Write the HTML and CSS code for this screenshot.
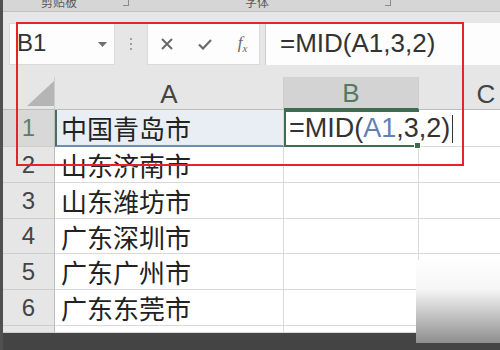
FILE: index.html
```html
<!DOCTYPE html>
<html lang="zh-CN">
<head>
    <meta charset="UTF-8">
    <title>MID 函数</title>
    <link rel="stylesheet" href="styles.css">
</head>
<body>
    <div class="window">
        <div class="ribbon-tail">
            <span class="group-label label-clip">剪贴板</span>
            <span class="launcher launcher-clip"></span>
            <span class="group-label label-font">字体</span>
            <span class="launcher launcher-font"></span>
        </div>

        <div class="formula-bar">
            <div class="name-box">
                <span>B1</span>
                <svg class="name-arrow" width="9" height="5" viewBox="0 0 9 5"><path d="M0 0 L9 0 L4.5 5 Z" fill="#707070"/></svg>
            </div>
            <div class="bar-grip">
                <span></span><span></span><span></span>
            </div>
            <div class="fx-buttons">
                <svg width="12" height="12" viewBox="0 0 12 12"><path d="M1 1 L11 11 M11 1 L1 11" stroke="#6a6a6a" stroke-width="2" fill="none"/></svg>
                <svg width="14" height="11" viewBox="0 0 14 11"><path d="M1 5.5 L5 9.5 L13 1" stroke="#6a6a6a" stroke-width="2.2" fill="none"/></svg>
                <span class="fx">f<sub>x</sub></span>
            </div>
            <div class="formula-input">=MID(A1,3,2)</div>
        </div>

        <div class="sheet">
            <div class="corner">
                <svg width="27" height="25" viewBox="0 0 27 25"><path d="M27 0 L27 25 L0 25 Z" fill="#b5b5b5"/></svg>
            </div>
            <div class="col-head">A</div>
            <div class="col-head is-active">B</div>
            <div class="col-head">C</div>

            <div class="row-head is-active">1</div>
            <div class="cell is-ref">中国青岛市</div>
            <div class="cell is-editing"><span>=MID(<span class="ref-text">A1</span>,3,2)</span><span class="caret"></span></div>
            <div class="cell is-covered"></div>

            <div class="row-head">2</div>
            <div class="cell">山东济南市</div>
            <div class="cell"></div>
            <div class="cell"></div>

            <div class="row-head">3</div>
            <div class="cell">山东潍坊市</div>
            <div class="cell"></div>
            <div class="cell"></div>

            <div class="row-head">4</div>
            <div class="cell">广东深圳市</div>
            <div class="cell"></div>
            <div class="cell"></div>

            <div class="row-head">5</div>
            <div class="cell">广东广州市</div>
            <div class="cell"></div>
            <div class="cell"></div>

            <div class="row-head">6</div>
            <div class="cell">广东东莞市</div>
            <div class="cell"></div>
            <div class="cell"></div>

            <div class="row-head"></div>
            <div class="cell"></div>
            <div class="cell"></div>
            <div class="cell"></div>
        </div>

        <div class="status-strip"></div>

        <div class="highlight-box"></div>
        <div class="corner-fade"></div>
    </div>
</body>
</html>
```

FILE: styles.css
```css
* {
    margin: 0;
    padding: 0;
    box-sizing: border-box;
}

body {
    width: 500px;
    height: 350px;
    overflow: hidden;
    background: #444;
    font-family: 'Liberation Sans', 'Noto Sans CJK SC', sans-serif;
    color: #333;
}

.window {
    position: relative;
    width: 500px;
    height: 350px;
    overflow: hidden;
    border-left: 3px solid #505050;
    background: #e6e6e6;
    display: flex;
    flex-direction: column;
}

/* bottom of the ribbon, labels cut off */
.ribbon-tail {
    height: 12px;
    flex-shrink: 0;
    background: #d6d6d6;
    border-bottom: 1px solid #c2c2c2;
    display: flex;
    align-items: flex-start;
    overflow: hidden;
}

.group-label {
    font-size: 12px;
    line-height: 12px;
    margin-top: -3px;
    color: #5a5a5a;
}

.label-clip {
    margin-left: 38px;
}

.launcher {
    width: 6px;
    height: 6px;
    border-right: 1px solid #8a8a8a;
    border-bottom: 1px solid #8a8a8a;
}

.launcher-clip {
    margin-left: 46px;
}

.label-font {
    margin-left: 116px;
}

.launcher-font {
    margin-left: 116px;
}

/* formula bar */
.formula-bar {
    height: 65px;
    flex-shrink: 0;
    display: flex;
    align-items: stretch;
    padding: 11px 0 12px 6px;
}

.name-box {
    width: 106px;
    background: #fdfdfd;
    border: 1px solid #dadada;
    display: flex;
    align-items: center;
    justify-content: space-between;
    padding: 0 7px 2px 7px;
    font-size: 24px;
    color: #333;
}

.name-arrow {
    margin-top: 2px;
}

.bar-grip {
    width: 32px;
    display: flex;
    flex-direction: column;
    align-items: center;
    justify-content: center;
    gap: 3px;
}

.bar-grip span {
    width: 2px;
    height: 2px;
    background: #a0a0a0;
}

.fx-buttons {
    width: 113px;
    background: #fdfdfd;
    border: 1px solid #dadada;
    display: grid;
    grid-template-columns: 38px 38px 37px;
    align-items: center;
    justify-items: center;
}

.fx {
    font-family: 'Liberation Serif', serif;
    font-style: italic;
    font-size: 17px;
    color: #6a6a6a;
}

.fx sub {
    font-size: 11px;
}

.formula-input {
    flex: 1;
    margin-left: 5px;
    background: #fdfdfd;
    border-left: 1px solid #cfcfcf;
    display: flex;
    align-items: center;
    padding: 0 0 2px 14px;
    font-size: 26px;
    color: #333;
}

/* sheet grid */
.sheet {
    height: 256px;
    flex-shrink: 0;
    display: grid;
    grid-template-columns: 52px 229px 135px 135px;
    grid-template-rows: 33px 37px 36px 36px 35px 36px 36px 7px;
    background: #fff;
}

.corner {
    background: #e6e6e6;
    border-right: 1px solid #cdcdcd;
    border-bottom: 1px solid #bdbdbd;
    display: flex;
    align-items: flex-end;
    justify-content: flex-end;
    padding: 0 0 3px 0;
}

.col-head {
    background: #e6e6e6;
    border-right: 1px solid #cdcdcd;
    border-bottom: 1px solid #bdbdbd;
    display: flex;
    align-items: center;
    justify-content: center;
    font-size: 26px;
    color: #444;
    padding-top: 2px;
}

.col-head.is-active {
    background: #d3d3d3;
    color: #557a64;
    border-bottom: 2px solid #3f6c50;
}

.row-head {
    background: #e6e6e6;
    border-right: 1px solid #bdbdbd;
    border-bottom: 1px solid #cdcdcd;
    display: flex;
    align-items: center;
    justify-content: center;
    font-size: 24px;
    color: #444;
}

.row-head.is-active {
    background: #d8d8d8;
    color: #5b8068;
}

.cell {
    background: #fff;
    border-right: 1px solid #dadada;
    border-bottom: 1px solid #dadada;
    display: flex;
    align-items: center;
    padding-left: 6px;
    font-size: 26px;
    color: #222;
    white-space: nowrap;
}

.cell.is-ref {
    background: #e9eef5;
    border-left: 2px solid #4c6d62;
    border-bottom: 2px solid #6f8db4;
    padding-left: 4px;
}

.cell.is-editing {
    position: relative;
    z-index: 2;
    border: 2px solid #3f6c50;
    border-right: none;
    padding-left: 3px;
    font-size: 27px;
    color: #333;
    overflow: visible;
}

.cell.is-editing > span {
    flex-shrink: 0;
}

.cell.is-editing::after {
    content: '';
    position: absolute;
    right: -2px;
    bottom: -4px;
    width: 5px;
    height: 5px;
    background: #3f6c50;
    border: 1px solid #fff;
}

.ref-text {
    color: #5f82b4;
}

.caret {
    display: inline-block;
    width: 1px;
    height: 28px;
    margin-left: 2px;
    background: #333;
}

.cell.is-covered {
    border-right: none;
}

.status-strip {
    flex: 1;
    background: #444;
}

/* annotation and watermark overlays */
.highlight-box {
    position: absolute;
    left: 13px;
    top: 22px;
    width: 448px;
    height: 144px;
    border: 2px solid #e3242b;
}

.corner-fade {
    position: absolute;
    left: 413px;
    top: 260px;
    width: 90px;
    height: 83px;
    background: linear-gradient(to bottom, #fefefe 0%, #f6f6f6 35%, #8e8e8e 100%);
}
```
